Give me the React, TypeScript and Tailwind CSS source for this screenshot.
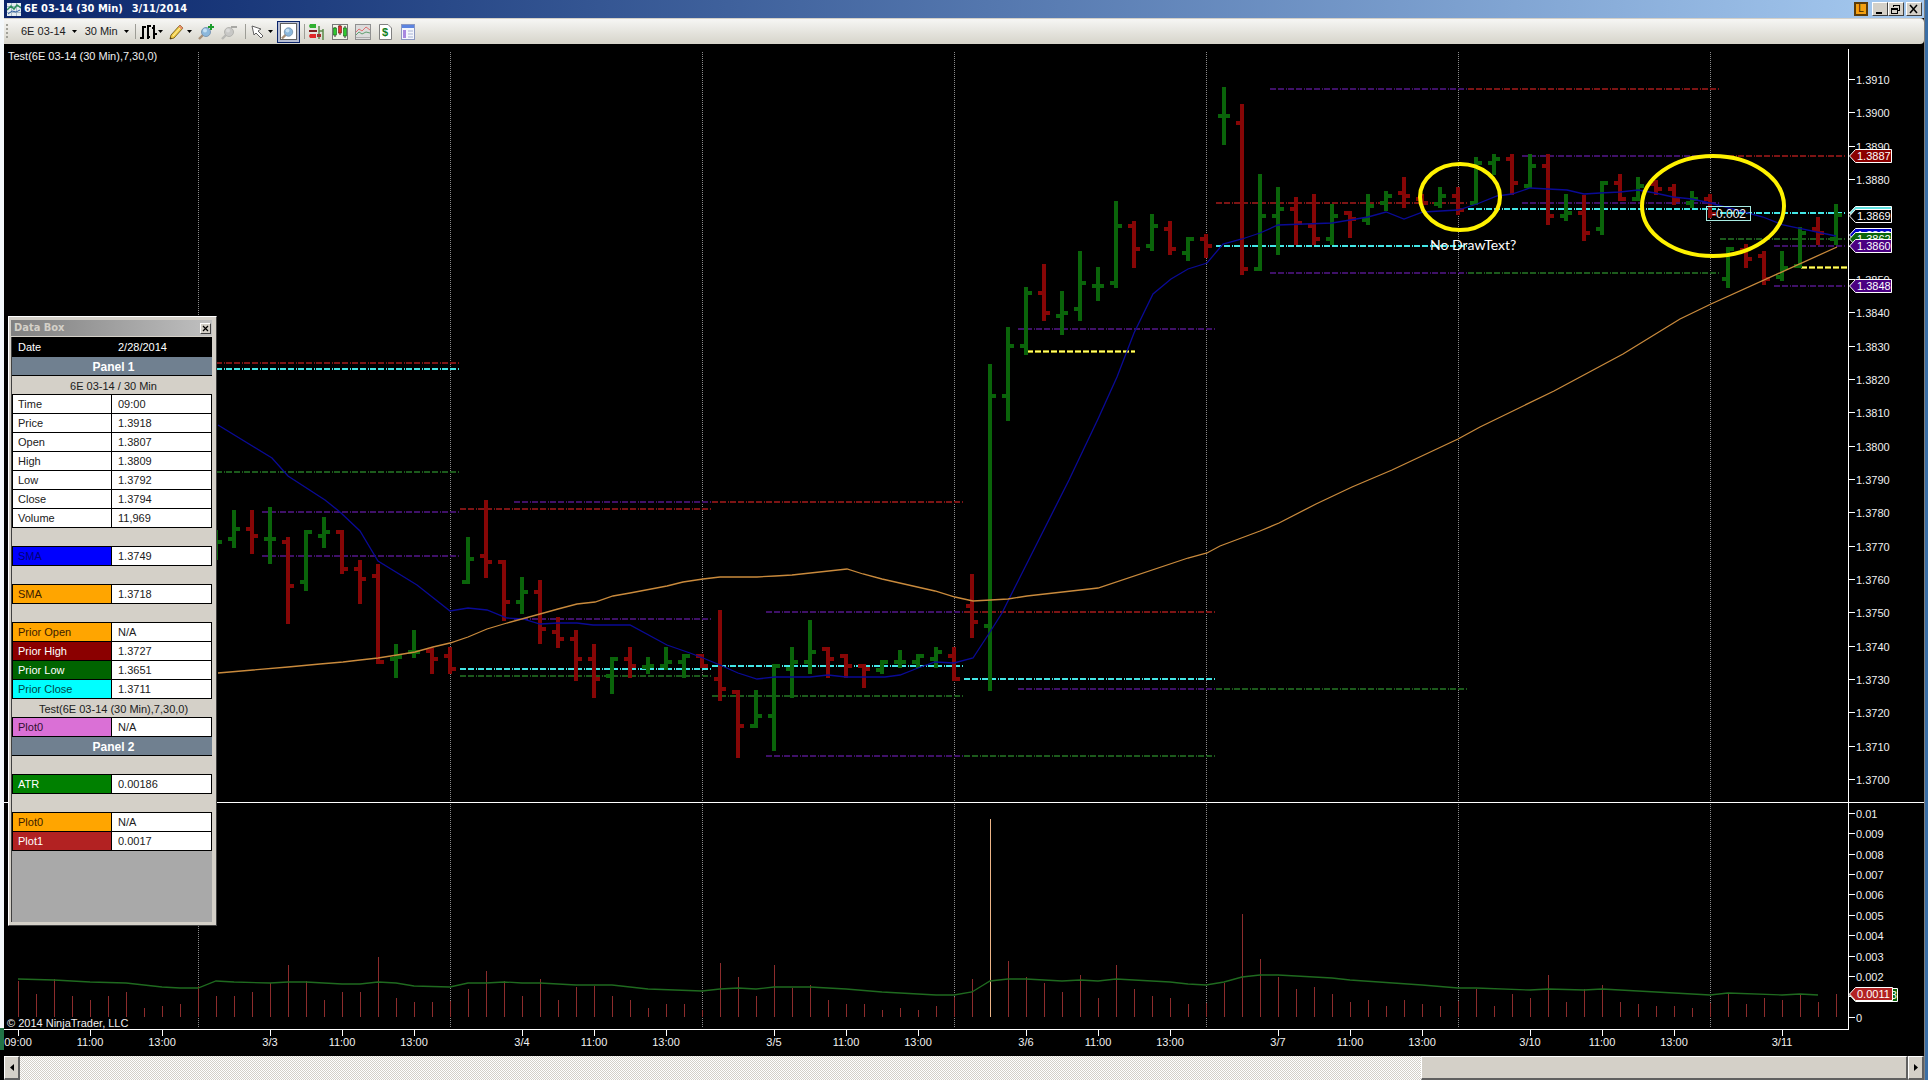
import { useState } from "react"
import type { ReactNode } from "react"
import clsx from "clsx"

type Color = "g" | "r"
// open, high, low, close as y positions on the chart canvas
type Bar = [number, number, number, number, Color]

const FIRST_BAR = 11
const BAR_STEP = 18
const barX = (i: number) => 18 + i * BAR_STEP

const bars: Bar[] = [
  [546, 530, 560, 542, "g"],
  [539, 510, 548, 529, "g"],
  [529, 510, 554, 536, "r"],
  [539, 507, 564, 539, "g"],
  [542, 537, 624, 586, "r"],
  [582, 530, 591, 532, "g"],
  [536, 517, 548, 532, "g"],
  [532, 530, 574, 569, "r"],
  [569, 560, 604, 579, "r"],
  [576, 564, 664, 662, "r"],
  [659, 644, 678, 657, "g"],
  [652, 630, 658, 652, "g"],
  [651, 648, 674, 659, "r"],
  [656, 647, 674, 669, "r"],
  [582, 537, 584, 559, "g"],
  [556, 500, 578, 562, "r"],
  [562, 560, 621, 602, "r"],
  [602, 577, 614, 592, "g"],
  [592, 580, 644, 629, "r"],
  [632, 617, 648, 639, "r"],
  [639, 630, 681, 659, "r"],
  [659, 644, 698, 679, "r"],
  [676, 657, 694, 659, "g"],
  [659, 647, 678, 666, "r"],
  [667, 657, 674, 666, "g"],
  [666, 647, 670, 662, "g"],
  [662, 654, 678, 656, "g"],
  [656, 654, 668, 666, "r"],
  [679, 610, 701, 689, "r"],
  [692, 690, 758, 726, "r"],
  [726, 690, 728, 716, "g"],
  [716, 664, 751, 666, "g"],
  [669, 647, 698, 662, "g"],
  [662, 620, 674, 652, "g"],
  [649, 647, 678, 659, "r"],
  [656, 654, 678, 666, "r"],
  [666, 664, 688, 669, "r"],
  [670, 660, 674, 662, "g"],
  [662, 650, 668, 662, "g"],
  [662, 654, 668, 656, "g"],
  [659, 647, 668, 652, "g"],
  [656, 647, 681, 679, "r"],
  [606, 574, 638, 622, "r"],
  [626, 364, 691, 396, "g"],
  [396, 327, 421, 346, "g"],
  [346, 287, 355, 293, "g"],
  [293, 264, 321, 313, "r"],
  [316, 291, 335, 313, "g"],
  [309, 251, 321, 283, "g"],
  [286, 267, 301, 286, "g"],
  [283, 201, 288, 226, "g"],
  [226, 221, 268, 249, "r"],
  [246, 214, 251, 226, "g"],
  [229, 221, 255, 249, "r"],
  [253, 237, 261, 239, "g"],
  [239, 234, 258, 246, "r"],
  [116, 87, 145, 116, "g"],
  [123, 104, 275, 269, "r"],
  [269, 174, 271, 216, "g"],
  [216, 187, 255, 209, "g"],
  [209, 197, 245, 223, "r"],
  [226, 194, 245, 239, "r"],
  [239, 204, 245, 216, "g"],
  [213, 211, 238, 219, "r"],
  [220, 194, 225, 206, "g"],
  [203, 191, 211, 196, "g"],
  [193, 177, 208, 196, "r"],
  [199, 194, 205, 203, "r"],
  [204, 187, 208, 196, "g"],
  [196, 187, 215, 210, "r"],
  [203, 157, 205, 163, "g"],
  [163, 154, 175, 159, "g"],
  [159, 154, 195, 183, "r"],
  [186, 154, 188, 166, "g"],
  [166, 154, 225, 216, "r"],
  [216, 194, 221, 213, "g"],
  [213, 195, 241, 233, "r"],
  [229, 181, 235, 183, "g"],
  [183, 174, 201, 199, "r"],
  [199, 177, 201, 186, "g"],
  [184, 180, 195, 189, "r"],
  [189, 184, 205, 200, "r"],
  [203, 191, 208, 199, "g"],
  [199, 194, 218, 214, "r"],
  [279, 247, 288, 249, "g"],
  [250, 244, 268, 259, "r"],
  [256, 251, 285, 279, "r"],
  [277, 251, 281, 268, "g"],
  [266, 227, 268, 233, "g"],
  [229, 217, 245, 233, "r"],
  [239, 204, 245, 215, "g"],
]

const fastSma =
  "218,425 272,458 288,476 325,500 340,512 360,531 378,561 417,585 450,611 468,608 487,610 507,618 523,619 540,624 558,623 577,623 593,625 630,625 667,645 690,653 703,658 720,665 738,673 757,679 775,677 810,677 828,675 846,677 885,677 900,675 918,668 935,662 954,663 973,658 990,632 1002,613 1010,597 1069,480 1098,419 1117,377 1134,333 1153,294 1171,279 1188,269 1207,263 1223,244 1242,239 1260,233 1278,225 1332,223 1368,217 1386,212 1404,219 1423,212 1458,210 1477,204 1497,196 1512,194 1530,188 1548,189 1567,190 1584,194 1600,193 1620,192 1638,190 1655,193 1673,197 1692,199 1710,203 1733,209 1763,217 1783,225 1836,236"

const slowSma =
  "218,673 253,670 288,667 320,664 343,662 360,660 378,658 397,655 415,652 433,647 450,643 468,637 487,629 507,623 540,614 558,609 577,604 595,602 613,596 630,593 667,586 683,582 703,579 720,577 757,577 775,576 792,575 847,569 863,574 882,579 935,591 955,597 973,601 1008,599 1027,596 1098,588 1188,558 1207,553 1220,546 1260,531 1279,523 1316,504 1352,487 1392,470 1458,439 1480,427 1554,391 1623,354 1680,319 1711,304 1837,247"

const atrLine: [number, number][] = [
  [0, 979], [2, 980], [4, 982], [6, 983], [7, 985], [8, 987], [9, 988], [10, 988],
  [11, 981], [12, 982], [14, 983], [15, 982], [16, 982], [18, 984], [19, 984], [20, 982],
  [21, 983], [22, 986], [24, 987], [25, 983], [26, 983], [27, 982], [28, 983], [29, 983],
  [31, 985], [33, 985], [35, 989], [38, 991], [39, 989], [40, 988], [41, 989], [42, 987],
  [44, 987], [46, 989], [48, 992], [51, 995], [52, 995], [53, 992], [54, 981], [55, 979],
  [56, 979], [58, 981], [59, 980], [60, 981], [61, 979], [64, 982], [65, 984], [66, 985],
  [67, 982], [68, 977], [69, 975], [70, 975], [73, 978], [74, 980], [78, 985], [80, 988],
  [81, 988], [84, 990], [85, 989], [87, 990], [88, 989], [92, 993], [94, 995], [95, 993],
  [98, 995], [99, 994], [100, 995],
]

const ranges = [
  981, 994, 979, 996, 1000, 996, 992, 1008, 1006, 1004, 986, 996, 996, 992, 983, 965, 981,
  1000, 992, 992, 957, 998, 1002, 1002, 1001, 989, 971, 981, 996, 979, 1000, 987, 986, 996,
  1000, 1008, 1004, 1004, 1010, 963, 977, 996, 965, 988, 985, 1000, 1004, 1004, 1010, 1008,
  1010, 1006, 997, 979, 819, 961, 977, 983, 992, 975, 998, 965, 989, 996, 998, 1004, 1003,
  983, 914, 959, 977, 989, 987, 994, 1002, 1000, 1006, 1000, 1004, 1006, 1001, 989, 1006,
  994, 998, 975, 1002, 989, 985, 1002, 1004, 1006, 1006, 1008, 1003, 994, 1004, 998, 1000,
  994, 1002, 994,
]

const RED = "#7d1414"
const GREEN = "#1c5a1c"
const PURPLE = "#3f1168"
const CYAN = "#43e6e6"

// the pattern restarts on every bar
const DASH_DOT = "6 2 6 2 1 1"

// y, from, to, color
const levels: [number, number, number, string][] = [
  [363, 208, 460, RED],
  [369, 208, 460, CYAN],
  [472, 208, 460, GREEN],
  [512, 262, 460, PURPLE],
  [556, 262, 460, PURPLE],
  [502, 514, 712, PURPLE],
  [502, 712, 964, RED],
  [509, 460, 712, RED],
  [619, 514, 712, PURPLE],
  [669, 460, 712, CYAN],
  [676, 460, 712, GREEN],
  [666, 712, 964, CYAN],
  [696, 712, 964, GREEN],
  [612, 766, 964, PURPLE],
  [612, 964, 1216, RED],
  [756, 766, 964, PURPLE],
  [756, 964, 1216, GREEN],
  [679, 964, 1216, CYAN],
  [689, 1018, 1216, PURPLE],
  [689, 1216, 1468, GREEN],
  [329, 1018, 1216, PURPLE],
  [203, 1216, 1468, RED],
  [246, 1216, 1468, CYAN],
  [273, 1270, 1468, PURPLE],
  [273, 1468, 1720, GREEN],
  [89, 1270, 1468, PURPLE],
  [89, 1468, 1720, RED],
  [156, 1522, 1720, PURPLE],
  [156, 1720, 1845, RED],
  [203, 1522, 1720, PURPLE],
  [209, 1468, 1720, CYAN],
  [213, 1720, 1846, CYAN],
  [239, 1720, 1846, GREEN],
  [246, 1774, 1846, PURPLE],
  [286, 1774, 1846, PURPLE],
]

const sessions = [198, 450, 702, 954, 1206, 1458, 1710]

const timeLabels: [number, string][] = [
  [0, "09:00"], [4, "11:00"], [8, "13:00"],
  [14, "3/3"], [18, "11:00"], [22, "13:00"],
  [28, "3/4"], [32, "11:00"], [36, "13:00"],
  [42, "3/5"], [46, "11:00"], [50, "13:00"],
  [56, "3/6"], [60, "11:00"], [64, "13:00"],
  [70, "3/7"], [74, "11:00"], [78, "13:00"],
  [84, "3/10"], [88, "11:00"], [92, "13:00"],
  [98, "3/11"],
]

const priceTicks = Array.from({ length: 22 }, (_, i) => ({
  label: ((13910 - i * 10) / 10000).toFixed(4),
  y: Math.round(79 + (i * 100) / 3),
}))

const rangeTicks = [
  "0.01", "0.009", "0.008", "0.007", "0.006", "0.005", "0.004", "0.003", "0.002", "", "0",
].map((label, i) => ({ label, y: Math.round(813 + i * 20.37) }))

const PriceFlag = ({ y, fill, label, x2 = 1892 }: { y: number; fill: string; label?: string; x2?: number }) => (
  <g>
    <path
      d={`M1849.5 ${y}L1855.5 ${y - 6.5}H${x2 - 0.5}V${y + 6.5}H1855.5Z`}
      fill={fill}
      stroke="#fff"
    />
    {label && (
      <text x="1857" y={y + 4} fill="#fff">
        {label}
      </text>
    )}
  </g>
)

const Chart = () => (
  <svg
    viewBox="4 44 1920 1012"
    className="block h-auto w-full bg-black font-['Liberation_Sans',Arial,sans-serif] text-[11px]"
    role="img"
    aria-label="6E 03-14 30 minute chart"
  >
    <g stroke="#8a8a8a" strokeDasharray="1 1" shapeRendering="crispEdges">
      {sessions.map((x) => (
        <path key={x} d={`M${x + 0.5} 52V1028`} />
      ))}
    </g>

    <g shapeRendering="crispEdges">
      {levels.map(([y, from, to, color], i) => (
        <path key={i} d={`M${from} ${y}H${to}`} stroke={color} strokeWidth="2" strokeDasharray={DASH_DOT} />
      ))}
      <path d="M1027 351.5H1135M1801 267.5H1847" stroke="#a8a020" strokeWidth="3" strokeDasharray="6 2" />
      <path d="M1027 351.5H1135M1801 267.5H1847" stroke="#ffff70" strokeDasharray="6 2" />
    </g>

    <g shapeRendering="crispEdges">
      {bars.map(([open, high, low, close, color], i) => {
        const x = barX(i + FIRST_BAR)
        return (
          <path
            key={x}
            d={`M${x - 2} ${high}h4V${low}h-4ZM${x - 6} ${open - 2}h6v4h-6ZM${x} ${close - 2}h6v4h-6Z`}
            fill={color === "g" ? "#0a640a" : "#860606"}
          />
        )
      })}
    </g>

    <polyline points={fastSma} fill="none" stroke="#0a0a96" strokeWidth="1.3" />
    <polyline points={slowSma} fill="none" stroke="#c98a3c" strokeWidth="1.3" />

    {/* text drawn by the indicator on the last session open */}
    <rect x="1706.5" y="206.5" width="44" height="14" fill="none" stroke="#a8ece4" />
    <text x="1712" y="218" fill="#f0f0f0" fontSize="12">
      -0.002
    </text>

    <g shapeRendering="crispEdges">
      {ranges.map((top, i) => (
        <path
          key={i}
          d={`M${barX(i) + 0.5} 1017V${top}`}
          stroke={top < 850 ? "#ecb487" : "#8c2c2c"}
        />
      ))}
    </g>
    <polyline
      points={atrLine.map(([i, y]) => `${barX(i)},${y}`).join(" ")}
      fill="none"
      stroke="#1f6a1f"
      strokeWidth="1.3"
    />

    <g stroke="#fff" shapeRendering="crispEdges">
      <path d="M4 802.5H1924M4 1029.5H1849M1848.5 49V1030" />
      {priceTicks.map(({ y }) => (
        <path key={y} d={`M1849 ${y + 0.5}h6`} />
      ))}
      {rangeTicks.map(({ y }) => (
        <path key={y} d={`M1849 ${y + 0.5}h6`} />
      ))}
      {timeLabels.map(([i]) => (
        <path key={i} d={`M${barX(i) + 0.5} 1030v6`} />
      ))}
    </g>

    <g fill="#f0f0f0">
      {priceTicks.map(({ label, y }) => (
        <text key={label} x="1856" y={y + 5}>
          {label}
        </text>
      ))}
      {rangeTicks.map(({ label, y }) => (
        <text key={y} x="1856" y={y + 5}>
          {label}
        </text>
      ))}
      {timeLabels.map(([i, label]) => (
        <text key={i} x={barX(i)} y="1046" textAnchor="middle">
          {label}
        </text>
      ))}
      <text x="8" y="60">
        Test(6E 03-14 (30 Min),7,30,0)
      </text>
      <text x="7" y="1027">
        © 2014 NinjaTrader, LLC
      </text>
    </g>

    <PriceFlag y={156} fill="#8b0000" label="1.3887" />
    <PriceFlag y={213} fill="#5fe0e0" />
    <PriceFlag y={216} fill="#000" label="1.3869" />
    <PriceFlag y={235} fill="#0000c8" label="1.3863" />
    <PriceFlag y={239} fill="#0a640a" label="1.3862" />
    <PriceFlag y={246} fill="#4b0082" label="1.3860" />
    <PriceFlag y={286} fill="#4b0082" label="1.3848" />
    <PriceFlag y={995} fill="#0a640a" label="0.00103" x2={1898} />
    <PriceFlag y={994} fill="#b22222" label="0.0011" x2={1893} />

    <g fill="none" stroke="#fff200" strokeWidth="4">
      <ellipse cx="1460" cy="197" rx="40" ry="33" />
      <ellipse cx="1713" cy="206" rx="71" ry="50" />
    </g>
    <text x="1430" y="250" fill="#fff" className="font-[Lato,sans-serif] text-[14px]">
      No DrawText?
    </text>
  </svg>
)

type Row =
  | { kind: "head"; text: string }
  | { kind: "sub"; text: string }
  | { kind: "blank" }
  | { kind: "value"; label: string; value: string; tone?: string }

const rows: Row[] = [
  { kind: "head", text: "Panel 1" },
  { kind: "sub", text: "6E 03-14 / 30 Min" },
  { kind: "value", label: "Time", value: "09:00" },
  { kind: "value", label: "Price", value: "1.3918" },
  { kind: "value", label: "Open", value: "1.3807" },
  { kind: "value", label: "High", value: "1.3809" },
  { kind: "value", label: "Low", value: "1.3792" },
  { kind: "value", label: "Close", value: "1.3794" },
  { kind: "value", label: "Volume", value: "11,969" },
  { kind: "blank" },
  { kind: "value", label: "SMA", value: "1.3749", tone: "bg-[#0000ff] text-[#000078]" },
  { kind: "blank" },
  { kind: "value", label: "SMA", value: "1.3718", tone: "bg-[#ffa500] text-[#3a2000]" },
  { kind: "blank" },
  { kind: "value", label: "Prior Open", value: "N/A", tone: "bg-[#ffa500] text-[#3a2000]" },
  { kind: "value", label: "Prior High", value: "1.3727", tone: "bg-[#8b0000] text-white" },
  { kind: "value", label: "Prior Low", value: "1.3651", tone: "bg-[#006400] text-white" },
  { kind: "value", label: "Prior Close", value: "1.3711", tone: "bg-[#00ffff] text-[#004848]" },
  { kind: "sub", text: "Test(6E 03-14 (30 Min),7,30,0)" },
  { kind: "value", label: "Plot0", value: "N/A", tone: "bg-[#da70d6] text-[#301030]" },
  { kind: "head", text: "Panel 2" },
  { kind: "blank" },
  { kind: "value", label: "ATR", value: "0.00186", tone: "bg-[#008000] text-white" },
  { kind: "blank" },
  { kind: "value", label: "Plot0", value: "N/A", tone: "bg-[#ffa500] text-[#3a2000]" },
  { kind: "value", label: "Plot1", value: "0.0017", tone: "bg-[#b22222] text-white" },
]

const DataBox = ({ onClose }: { onClose: () => void }) => (
  <section
    aria-label="Data Box"
    className="absolute top-[272px] left-1 flex h-[610px] w-[209px] flex-col border border-t-white border-r-[#404040] border-b-[#404040] border-l-white bg-[#d4d0c8] pt-[3px] pr-1 pb-[3px] pl-[2px] text-[11px]"
  >
    <header className="flex h-4 items-center justify-between bg-linear-to-r from-[#808080] to-[#c0c0c0] pr-px pl-[3px]">
      <h2 className="font-['DejaVu_Sans_Condensed','Open_Sans',sans-serif] text-[11px] leading-4 font-bold text-[#d4d0c8]">
        Data Box
      </h2>
      <button
        type="button"
        aria-label="Close data box"
        onClick={onClose}
        className="flex size-[11px] items-center justify-center border border-t-white border-r-[#404040] border-b-[#404040] border-l-white bg-[#d4d0c8]"
      >
        <svg viewBox="0 0 7 7" className="size-[7px]" stroke="#000" strokeWidth="1.2">
          <path d="M1 1L6 6M6 1L1 6" />
        </svg>
      </button>
    </header>
    <div className="mt-px flex-1 border-l border-[#404040] bg-[#a9a9a9]">
      <table className="w-full table-fixed border-separate border-spacing-0 leading-4">
        <tbody>
          <tr className="bg-black text-white">
            <th scope="row" className="h-5 w-[100px] pl-[6px] text-left font-normal">
              Date
            </th>
            <td className="h-5 pl-[6px]">2/28/2014</td>
          </tr>
          {rows.map((row, i) => {
            if (row.kind === "value") {
              return (
                <tr key={i}>
                  <th
                    scope="row"
                    className={clsx(
                      "h-[19px] border-r border-b border-l border-black pl-[5px] text-left font-normal",
                      row.tone ?? "bg-white text-[#202020]",
                    )}
                  >
                    {row.label}
                  </th>
                  <td className="h-[19px] border-r border-b border-black bg-white pl-[6px] text-[#202020]">
                    {row.value}
                  </td>
                </tr>
              )
            }
            return (
              <tr key={i}>
                <td
                  colSpan={2}
                  className={clsx(
                    "h-[19px] border-b border-black pt-px pl-[3px] text-center",
                    row.kind === "head"
                      ? "bg-[#708090] text-[12px] font-bold text-white"
                      : "bg-[#d4d0c8] text-[#202020]",
                  )}
                >
                  {row.kind === "blank" ? null : row.text}
                </td>
              </tr>
            )
          })}
        </tbody>
      </table>
    </div>
  </section>
)

const Caret = () => (
  <svg viewBox="0 0 5 3" className="h-[3px] w-[5px]" fill="#000">
    <path d="M0 0H5L2.5 3Z" />
  </svg>
)

const Separator = () => <span className="h-[15px] w-px bg-[#9d9d96]" />

const Tool = ({
  label,
  children,
  active,
  className,
}: {
  label: string
  children: ReactNode
  active?: boolean
  className?: string
}) => (
  <button
    type="button"
    aria-label={label}
    title={label}
    className={clsx(
      "flex items-center justify-center",
      active ? "h-[22px] w-[23px] border border-[#0a246a] bg-[#b6bdd2]" : "h-5",
      className,
    )}
  >
    {children}
  </button>
)

const Magnifier = ({ muted, mark }: { muted?: boolean; mark?: "plus" | "minus" }) => (
  <svg viewBox="0 0 16 16" className="size-4">
    <path d="M6 10L1 15" stroke={muted ? "#b8b8b4" : "#a89078"} strokeWidth="2.4" />
    <circle
      cx="8"
      cy="8"
      r="4.5"
      fill={muted ? "#c8c8c6" : "#8cb8dc"}
      stroke={muted ? "#b4b4b0" : "#7c98b4"}
    />
    <circle cx="7" cy="6.5" r="2" fill={muted ? "#dadad8" : "#c4e0f4"} />
    {mark === "plus" && <path d="M13 0V6M10 3H16" stroke="#1c9c2c" strokeWidth="2" />}
    {mark === "minus" && <path d="M10 3H16" stroke="#a8a8a4" strokeWidth="2" />}
  </svg>
)

const Toolbar = () => (
  <div
    role="toolbar"
    aria-label="Chart tools"
    className="flex h-[26px] items-center rounded-r-sm border-t border-[#d4d0c8] bg-linear-to-b from-[#f6f6f4] to-[#d6d4ca] text-[11px] text-[#202020]"
  >
    <span className="ml-[2px] h-4 w-[2px] bg-[repeating-linear-gradient(#a0a098_0_2px,transparent_2px_4px)]" />
    <button type="button" className="ml-[13px] flex items-center gap-[6px]">
      6E 03-14 <Caret />
    </button>
    <button type="button" className="ml-2 flex items-center gap-[6px]">
      30 Min <Caret />
    </button>
    <div className="ml-[6px] flex items-center gap-1">
      <Separator />
      <Tool label="Chart style" className="gap-px">
        <svg viewBox="0 0 17 16" className="h-4 w-[17px]" fill="none" stroke="#000" strokeWidth="2">
          <path d="M0 14H3V3H6M8 15V1M8 2H11M8 13H10M14 1V15M12 4H14M14 10H17" />
        </svg>
        <Caret />
      </Tool>
    </div>
    <Tool label="Drawing tools" className="ml-[6px] gap-[2px]">
      <svg viewBox="0 0 16 16" className="size-4">
        <path d="M2 11L11 1L14 4L5 14L1 15Z" fill="#f4d04c" stroke="#7c6420" />
        <path d="M11 1L14 4L12.500 5.500L9.500 2.700Z" fill="#e89070" />
        <path d="M4 12L11 4" stroke="#fff0a0" />
        <path d="M1 15L1.500 13L3 14.500Z" fill="#403010" />
      </svg>
      <Caret />
    </Tool>
    <Tool label="Zoom in" className="ml-[6px]">
      <Magnifier mark="plus" />
    </Tool>
    <Tool label="Zoom out" className="ml-[7px]">
      <Magnifier muted mark="minus" />
    </Tool>
    <div className="ml-2 flex items-center gap-[5px]">
      <Separator />
      <Tool label="Cursor" className="gap-1">
        <svg viewBox="0 0 13 14" className="h-[14px] w-[13px]">
          <path d="M1 1L10 4L7 6L12 11L10 13L5 8L3 10Z" fill="#fff" stroke="#606060" />
        </svg>
        <Caret />
      </Tool>
    </div>
    <Tool label="Data box" active className="ml-1">
      <span className="flex size-[17px] items-center justify-center border border-[#606060] bg-white">
        <Magnifier />
      </span>
    </Tool>
    <div className="ml-1 flex items-center gap-[7px]">
      <Separator />
      <Tool label="Chart trader" className="-ml-[3px]">
        <svg viewBox="0 0 16 16" className="size-4">
          <path d="M10 2V15M14 5V16M10 7H14" stroke="#5c8c4c" strokeWidth="1.500" />
          <path d="M1 0H7V4H1L0 2Z" fill="#30b030" />
          <path d="M0 6H8V8H0Z" fill="#802020" />
          <path d="M1 10H7V14H1L0 12Z" fill="#e02828" />
          <path d="M8 10H12V13H8Z" fill="#a03030" />
        </svg>
      </Tool>
      <Tool label="Data series">
        <svg viewBox="0 0 16 16" className="size-4">
          <rect x=".5" y=".5" width="15" height="15" fill="#f0f4e8" stroke="#787878" />
          <path d="M3 3V13M8 1V11M13 2V14" stroke="#303030" />
          <rect x="1.500" y="4" width="3" height="7" fill="#30c830" stroke="#106010" strokeWidth=".6" />
          <rect x="6.500" y="2" width="3" height="7" fill="#e83030" stroke="#701010" strokeWidth=".6" />
          <rect x="11.500" y="4" width="3" height="8" fill="#30c830" stroke="#106010" strokeWidth=".6" />
        </svg>
      </Tool>
      <Tool label="Indicators">
        <svg viewBox="0 0 16 16" className="size-4" fill="none">
          <rect x=".5" y=".5" width="15" height="15" fill="#dcdcdc" stroke="#909090" />
          <path d="M1 8L4 5L7 7L11 3L15 6" stroke="#e07070" />
          <path d="M1 11L4 8L7 10L11 8L15 9" stroke="#60a070" />
          <path d="M1 13.500H15" stroke="#b0b0b0" />
        </svg>
      </Tool>
      <Tool label="Strategies">
        <svg viewBox="0 0 14 16" className="h-4 w-[14px]">
          <path d="M1.500 .5H10L13.500 4V15.500H1.500Z" fill="#fff" stroke="#808080" />
          <text x="7" y="12" fill="#108020" fontSize="11" fontWeight="bold" textAnchor="middle">
            $
          </text>
        </svg>
      </Tool>
      <Tool label="Properties" className="ml-px">
        <svg viewBox="0 0 16 16" className="size-4">
          <rect x="1.500" y=".5" width="13" height="15" fill="#f4f6fc" stroke="#8c98c0" />
          <path d="M2 1H14V4H2Z" fill="#5c84e0" />
          <path d="M3 6H6V14H3Z" fill="#a888e0" />
          <path d="M8 7H13M8 10H13M8 13H13" stroke="#a8b4d4" />
        </svg>
      </Tool>
    </div>
  </div>
)

const WindowButton = ({ label, children }: { label: string; children: ReactNode }) => (
  <button
    type="button"
    aria-label={label}
    className="flex h-[14px] w-4 items-center justify-center border border-t-white border-r-[#404040] border-b-[#404040] border-l-white bg-[#d4d0c8]"
  >
    <svg viewBox="0 0 12 11" className="h-[11px] w-3" fill="none" stroke="#000" shapeRendering="crispEdges">
      {children}
    </svg>
  </button>
)

const TitleBar = () => (
  <header className="flex h-[18px] items-center bg-linear-to-r from-[#0a246a] to-[#a6caf0] pr-[2px] pl-[3px]">
    <svg viewBox="0 0 14 13" className="h-[13px] w-[14px]" fill="none">
      <rect width="14" height="13" fill="#e4ecf0" />
      <path d="M0 3.500H14M0 9.500H14M4.500 0V13M9.500 0V13" stroke="#a4b8c8" />
      <path d="M0 7L4 3L7 6L10 2L14 5" stroke="#2c8c5c" strokeWidth="1.500" />
      <path d="M1 11L5 8L9 9L13 7" stroke="#2c5ca0" />
    </svg>
    <h1 className="ml-[3px] flex gap-[9px] font-['DejaVu_Sans_Condensed','Open_Sans',sans-serif] text-[11px] leading-4 font-bold text-white">
      <span>6E 03-14 (30 Min)</span>
      <span>3/11/2014</span>
    </h1>
    <button
      type="button"
      aria-label="Link"
      className="mr-1 ml-auto h-[14px] w-[14px] border-2 border-[#5c3c08] bg-[#f4a010] text-[10px] leading-[10px] text-[#3c2400]"
    >
      L
    </button>
    <WindowButton label="Minimize">
      <path d="M2 8.500H8" strokeWidth="2" />
    </WindowButton>
    <WindowButton label="Restore">
      <path d="M3.500 3V1.500H9.500V6.500H8M3 1.500H10M1.500 4.500H7.500V9.500H1.500ZM1 5H8" />
    </WindowButton>
    <span className="w-[2px]" />
    <WindowButton label="Close">
      <path d="M2 1L9 9M9 1L2 9" strokeWidth="1.500" shapeRendering="auto" />
    </WindowButton>
  </header>
)

const ScrollButton = ({ label, d }: { label: string; d: string }) => (
  <button
    type="button"
    aria-label={label}
    className="flex h-full w-4 items-center justify-center border-t border-r-2 border-b-2 border-l border-t-white border-r-[#606060] border-b-[#606060] border-l-white bg-[#d4d0c8]"
  >
    <svg viewBox="0 0 4 7" className="h-[7px] w-1" fill="#000">
      <path d={d} />
    </svg>
  </button>
)

const ScrollBar = () => (
  <div className="flex h-6 bg-[repeating-conic-gradient(#ffffff_0_25%,#d4d0c8_0_50%)] bg-[length:2px_2px]">
    <ScrollButton label="Scroll left" d="M4 0V7L0 3.500Z" />
    <div className="flex flex-1 justify-end">
      <div
        role="scrollbar"
        aria-label="Chart position"
        aria-controls="chart"
        aria-orientation="horizontal"
        aria-valuenow={100}
        className="w-[487px] border-t border-r-2 border-b-2 border-l border-t-white border-r-[#606060] border-b-[#606060] border-l-white bg-[#d4d0c8]"
      />
    </div>
    <ScrollButton label="Scroll right" d="M0 0V7L4 3.500Z" />
  </div>
)

export default function App() {
  const [showDataBox, setShowDataBox] = useState(true)

  return (
    <div className="flex min-h-screen bg-black font-['Liberation_Sans',Arial,sans-serif]">
      {/* sliver of the windows behind */}
      <div className="flex w-1 flex-col">
        <div className="flex-1 bg-[#f4f8fb]" />
        <div className="h-[22px] bg-[#217346]" />
        <div className="h-[30px] bg-black" />
      </div>
      <main className="min-w-0 flex-1">
        <TitleBar />
        <Toolbar />
        <div id="chart" className="relative">
          <Chart />
          {showDataBox && <DataBox onClose={() => setShowDataBox(false)} />}
        </div>
        <ScrollBar />
      </main>
      <div className="w-1 border-l border-[#808080] bg-[#3a6ea5]" />
    </div>
  )
}
